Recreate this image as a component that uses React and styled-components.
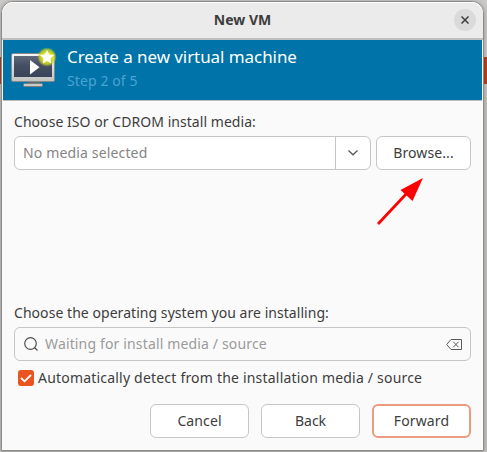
import React from "react";
import styled, { createGlobalStyle } from "styled-components";

const Global = createGlobalStyle`
  * { box-sizing: border-box; }
  body { margin: 0; }
`;

const Desktop = styled.div`
  width: 487px;
  height: 452px;
  padding: 1px 0 0 1px;
  overflow: hidden;
  font-family: "Noto Sans", "Open Sans", sans-serif;
  font-size: 14px;
  color: #3d3d3d;
  background: linear-gradient(#cbcac8 0 57px, #b8421f 57px 84px, #c6c5c4 84px);
`;

const Dialog = styled.div`
  width: 483px;
  height: 450px;
  display: flex;
  flex-direction: column;
  border: 1px solid #8c8c8c;
  border-radius: 12px 12px 0 0;
  background: #fafafa;
  overflow: hidden;
  box-shadow: 0 1px 5px rgba(0, 0, 0, 0.3);
`;

const TitleBar = styled.header`
  height: 38px;
  flex: none;
  display: grid;
  grid-template-columns: 40px 1fr 40px;
  align-items: center;
  justify-items: center;
  background: #ebebeb;
  border-bottom: 2px solid #c0bfbd;
  border-radius: 11px 11px 0 0;
  box-shadow: inset 0 1px #fff;
`;

const Text = styled.span`
  white-space: nowrap;
  line-height: 20px;
  letter-spacing: ${(p) => p.$track || 0}px;
`;

const Title = styled(Text)`
  grid-column: 2;
  font-weight: 700;
`;

const CloseButton = styled.button`
  width: 22px;
  height: 22px;
  padding: 0;
  margin-right: 7px;
  display: grid;
  place-items: center;
  justify-self: end;
  border: 0;
  border-radius: 50%;
  background: #dadada;
`;

const Banner = styled.section`
  height: 61px;
  flex: none;
  display: flex;
  align-items: center;
  gap: 9px;
  margin: 0 1px;
  padding-left: 7px;
  background: #0073a9;
  border-bottom: 1px solid #bcbcbc;
`;

const BannerText = styled.div`
  display: flex;
  flex-direction: column;
  padding-bottom: 4px;
`;

const Heading = styled(Text)`
  font-size: 17px;
  line-height: 26px;
  color: #fff;
`;

const Step = styled(Text)`
  line-height: 22px;
  color: #4ba3d5;
`;

const Content = styled.main`
  flex: 1;
  display: flex;
  flex-direction: column;
  padding: 11px 12px 12px;
`;

const MediaRow = styled.div`
  display: flex;
  gap: 5px;
  margin-top: 4px;
`;

const Field = styled.div`
  height: 34px;
  display: flex;
  align-items: center;
  border: 1px solid #c6c6c6;
  border-radius: 6px;
`;

const Combo = styled(Field)`
  width: 357px;
  background: #fff;
  color: #858585;
`;

const ComboValue = styled.div`
  flex: 1;
  padding-left: 8px;
`;

const ComboArrow = styled.div`
  width: 35px;
  height: 100%;
  display: grid;
  place-items: center;
  border-left: 1px solid #c6c6c6;
`;

const Button = styled.button`
  width: ${(p) => p.$width || 99}px;
  height: 34px;
  padding: 0;
  display: grid;
  place-items: center;
  font: inherit;
  color: inherit;
  background: #fff;
  border: ${(p) => (p.$primary ? "2px solid #ea9b80" : "1px solid #c6c6c6")};
  border-radius: 6px;
`;

const SystemGroup = styled.div`
  display: flex;
  flex-direction: column;
  margin-top: 133px;
`;

const SearchField = styled(Field)`
  margin-top: 4px;
  padding: 0 8px 0 9px;
  gap: 7px;
  color: #9a9a9a;
`;

const Grow = styled(Text)`
  flex: 1;
`;

const CheckRow = styled.label`
  display: flex;
  align-items: center;
  gap: 4px;
  margin: 7px 0 0 4px;
`;

const CheckBox = styled.span`
  width: 16px;
  height: 16px;
  display: grid;
  place-items: center;
  border-radius: 3px;
  background: #e95420;
`;

const Actions = styled.footer`
  display: flex;
  justify-content: flex-end;
  gap: 12px;
  margin-top: auto;
`;

const Pointer = styled.svg`
  position: absolute;
  left: 374px;
  top: 174px;
`;

const MachineIcon = () => (
  <svg width="48" height="48" viewBox="0 0 48 48">
    <defs>
      <linearGradient id="screen" x1="0" y1="0" x2="0" y2="1">
        <stop offset="0" stopColor="#60697a" />
        <stop offset="0.45" stopColor="#454e62" />
        <stop offset="1" stopColor="#39445a" />
      </linearGradient>
      <linearGradient id="frame" x1="0" y1="0" x2="0" y2="1">
        <stop offset="0" stopColor="#f6f6f4" />
        <stop offset="1" stopColor="#c3c3c0" />
      </linearGradient>
      <radialGradient id="glow">
        <stop offset="0.4" stopColor="#e8e920" />
        <stop offset="0.75" stopColor="#c8d51c" stopOpacity="0.8" />
        <stop offset="1" stopColor="#b8ce22" stopOpacity="0" />
      </radialGradient>
    </defs>
    <path d="M18 35h12v4H18z" fill="#65686a" />
    <rect x="13.5" y="37.5" width="19" height="3" rx="1" fill="#c9c9c7" stroke="#7c7f80" />
    <rect x="1.5" y="7.5" width="43" height="28" rx="1.5" fill="url(#frame)" stroke="#878a8a" />
    <rect x="4" y="10" width="38" height="21" fill="url(#screen)" />
    <path d="M20 14v14.500l9.500-7.200z" fill="#fff" />
    <circle cx="37" cy="11" r="9.800" fill="url(#glow)" />
    <path d="M37 4l2.100 4.500 4.900.6-3.600 3.400.9 4.900-4.300-2.400-4.300 2.400.9-4.900L30 9.100l4.900-.6z" fill="#fff" />
  </svg>
);

export default function App() {
  return (
    <Desktop>
      <Global />
      <Dialog>
        <TitleBar>
          <Title>New VM</Title>
          <CloseButton aria-label="Close">
            <svg width="8" height="8" viewBox="0 0 8 8" stroke="#3d3d3d" strokeWidth="1.500">
              <path d="M.5.500l7 7M7.500.500l-7 7" />
            </svg>
          </CloseButton>
        </TitleBar>
        <Banner>
          <MachineIcon />
          <BannerText>
            <Heading $track={-0.07}>Create a new virtual machine</Heading>
            <Step $track={0.1}>Step 2 of 5</Step>
          </BannerText>
        </Banner>
        <Content>
          <Text $track={0.05}>Choose ISO or CDROM install media:</Text>
          <MediaRow>
            <Combo>
              <ComboValue><Text $track={0.15}>No media selected</Text></ComboValue>
              <ComboArrow>
                <svg width="10" height="6" viewBox="0 0 10 6" fill="none" stroke="#555" strokeWidth="1.200">
                  <path d="M.5.500L5 4.800 9.500.500" />
                </svg>
              </ComboArrow>
            </Combo>
            <Button $width={95}><Text $track={0.1}>Browse...</Text></Button>
          </MediaRow>
          <SystemGroup>
            <Text $track={0.05}>Choose the operating system you are installing:</Text>
            <SearchField>
              <svg width="14" height="14" viewBox="0 0 14 14" fill="none" stroke="#505050" strokeWidth="1.200">
                <circle cx="6.500" cy="6.500" r="5.800" />
                <path d="M10.500 10.500L13.500 13.500" />
              </svg>
              <Grow $track={0.15}>Waiting for install media / source</Grow>
              <svg width="16" height="11" viewBox="0 0 16 11" fill="none" stroke="#5a5a5a">
                <path d="M5 .5h10.500v10H5L.7 5.500zM7.200 2.700l5.400 5.600M12.600 2.700L7.200 8.300" />
              </svg>
            </SearchField>
            <CheckRow>
              <CheckBox>
                <svg width="12" height="9" viewBox="0 0 12 9" fill="none" stroke="#fff" strokeWidth="1.800">
                  <path d="M1 4l3.500 3.300L11 1" />
                </svg>
              </CheckBox>
              <Text $track={0.2}>Automatically detect from the installation media / source</Text>
            </CheckRow>
          </SystemGroup>
          <Actions>
            <Button><Text $track={0.1}>Cancel</Text></Button>
            <Button><Text>Back</Text></Button>
            <Button $primary><Text $track={0.15}>Forward</Text></Button>
          </Actions>
        </Content>
      </Dialog>
      <Pointer width="54" height="54" viewBox="0 0 54 54">
        <path d="M4 50L34 18" stroke="#f00" strokeWidth="2.800" />
        <path d="M49 4L26.500 16 38.500 27z" fill="#f00" />
      </Pointer>
    </Desktop>
  );
}
